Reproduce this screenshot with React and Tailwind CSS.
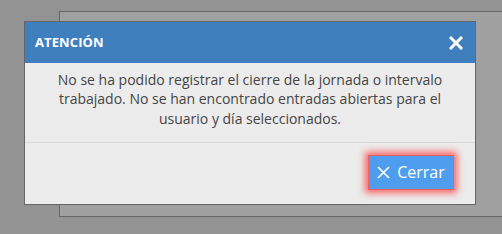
import React from "react";

export default function App() {
  return (
    <div className="relative w-[502px] h-[234px] overflow-hidden bg-[#939393]" style={{ fontFamily: '"Open Sans", sans-serif' }}>
      <div className="pt-[11px] pl-[59px]">
        <div className="h-[206px] w-[460px] border border-[#666] bg-[#a0a0a0]" />
      </div>
      <div className="absolute left-[24px] top-[21px] w-[452px] border border-[#666] bg-[#ececec]">
        <div className="flex h-[41px] items-center justify-between bg-[#3f7fbd] pl-[10px] pr-[12px]">
          <span className="text-[13px] font-bold leading-none text-white tracking-[0.1px]">ATENCIÓN</span>
          <svg width="14" height="14" viewBox="0 0 14 14">
            <path d="M2 2 L12 12 M12 2 L2 12" stroke="white" strokeWidth="3" strokeLinecap="square" />
          </svg>
        </div>
        <div className="px-[30px] pt-[7px] pb-[14px] text-center text-[14px] leading-[19.3px] text-[#454545]">
          No se ha podido registrar el cierre de la jornada o intervalo trabajado. No se han encontrado entradas abiertas para el usuario y día seleccionados.
        </div>
        <div className="h-px bg-[#dadada]" />
        <div className="flex justify-end pt-[12px] pb-[14px] pr-[21px]">
          <button className="flex h-[35px] w-[86px] items-center justify-center gap-[7px] border border-[#f06060] bg-[#4f9def] text-[16px] text-white shadow-[0_0_7px_3px_rgba(255,40,40,0.7)]">
            <svg width="13" height="13" viewBox="0 0 13 13">
              <path d="M1 1 L12 12 M12 1 L1 12" stroke="white" strokeWidth="1.7" />
            </svg>
            <span className="leading-none">Cerrar</span>
          </button>
        </div>
      </div>
    </div>
  );
}
